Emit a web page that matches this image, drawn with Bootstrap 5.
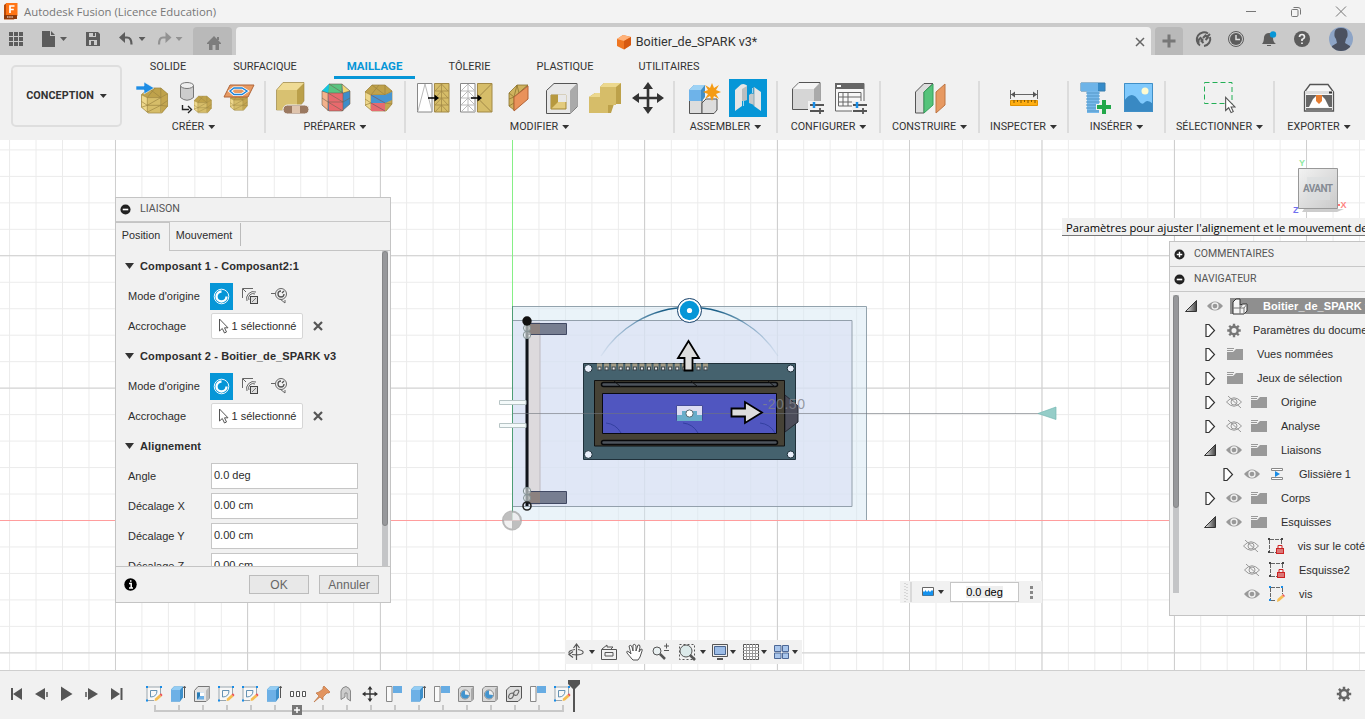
<!DOCTYPE html>
<html lang="fr">
<head>
<meta charset="utf-8">
<meta name="viewport" content="width=device-width, initial-scale=1">
<title>Autodesk Fusion (Licence Education)</title>
<link href="https://cdn.jsdelivr.net/npm/bootstrap@5.3.0/dist/css/bootstrap.min.css" rel="stylesheet">
<style>
:root{--ui:Roboto,"Liberation Sans",sans-serif;--txt:"Liberation Sans",Arial,sans-serif;--chrome:#f1f1f1;--accent:#0696d7}
body{height:719px;overflow:hidden;font:11px/1 var(--txt);color:#2d2d2d;background:var(--chrome)}
svg{display:block;flex-shrink:0;overflow:visible}
.caret{width:7px;height:4px;flex-shrink:0;background:#333;clip-path:polygon(0 0,100% 0,50% 100%)}
.titlebar{height:23px;background:#f3f3f3;padding-left:3px}
.apptitle{font:11.35px/23px "Open Sans",sans-serif;color:#777;margin-left:5px}
.wincontrols{gap:32px;padding-right:18px}
.tabbar{height:32px;background:#cacaca;color:#5c5c5c}
.quick{width:193px;padding-left:7px}
.quick .file{margin-left:14px}.quick .save{margin-left:15px}.quick .undo{margin-left:14px}.quick .redo{margin-left:9px}
.quick .caretslot{width:13px;display:flex;justify-content:center}
.quick .undocaret{width:10px}
.quick .redocaret{width:10px}
.quick .caret{background:#5c5c5c}
.hometab{width:39px;height:28px;background:#b9b9b9;border-radius:4px 4px 0 0;margin-right:4px;padding-left:2px;color:#7d7d7d}
.doctab{width:915px;height:28px;background:var(--chrome);border-radius:4px 4px 0 0;font:12.6px/28px var(--ui);color:#333;position:relative;padding-top:2px}
.doctab .logo{margin-left:-14px}
.doctab .shut{position:absolute;right:6px;top:10px}
.addtab{width:28px;height:28px;background:#b9b9b9;border-radius:4px 4px 0 0;margin-left:4px;color:#777}
.status{padding-left:11px;gap:15px}
.status svg:last-child{margin-left:2px}
.ribbon{height:85px;font-family:var(--ui);color:#333}
.workspace{width:111px;height:62px;margin:10px 0 0 11px;border:2px solid #dedede;border-radius:5px;font-weight:700;font-size:10.8px;letter-spacing:.05px;gap:6px}
.modes{height:24px;padding-left:16px;font-size:10.95px}
.modes span{height:24px;line-height:23px;text-align:center;margin-right:23px;white-space:nowrap;color:#333}
.modes span:nth-child(1){width:60px}.modes span:nth-child(2){width:88px;margin-right:25px}
.modes span:nth-child(3){width:81px;margin-right:22px;color:var(--accent);font-weight:700;font-size:11.5px;border-bottom:3px solid var(--accent)}
.modes span:nth-child(4){width:65px}.modes span:nth-child(5){width:80px}.modes span:nth-child(6){width:82px}
.group{position:relative;height:61px;flex-shrink:0;display:flex;flex-direction:column;align-items:center}
.group:not(:last-child)::after{content:"";position:absolute;right:-1px;top:2px;height:52px;width:2px;background:#dcdcdc}
.tools{display:flex;gap:5px;margin-left:2px}
.w-create .tools{margin-left:7px}
.grouplabel{display:flex;align-items:center;gap:4px;font-size:10.75px;height:19px;padding-top:1px;white-space:nowrap}
.w-create{width:143px}.w-prep{width:140px}.w-mod{width:269px}.w-asm{width:103px}.w-cons{width:99px}.w-insp{width:89px}.w-ins{width:97px}.w-sel{width:109px}.w-exp{width:90px}
.stage{height:530px;position:relative;overflow:hidden;background:#fff}
.stage>.scene{position:absolute;left:0;top:0}
.win{position:absolute;background:var(--chrome)}
.dialogwin{left:115px;top:57px;width:276px;height:406px;border:1px solid #c4c4c4}
.winhead{height:24px;border-bottom:1px solid #c8c8c8;font:10.7px/1 var(--ui);color:#555;gap:9px;padding-left:4px}
.browser .winhead{height:25px;font-size:10.5px}
.dtabs{height:29px;font-size:10.8px}
.dtabs span{height:29px;line-height:27px;text-align:center;border-right:1px solid #c4c4c4;border-bottom:1px solid #c4c4c4}
.dtabs span:first-child{width:54px;border-top:1px solid #c4c4c4;border-bottom:0;line-height:25px;padding-right:3px}
.dtabs span:nth-child(2){width:70px;border-right:0;padding-right:2px}
.dtabs span:nth-child(3){flex:1;border-right:0;position:relative}
.dtabs span:nth-child(3)::before{content:"";position:absolute;left:0;top:1px;height:23px;border-left:1px solid #bbb}
.dbody{height:315px;overflow:hidden;position:relative}
.line{height:30px;display:flex;align-items:center;padding-left:12px}
.line>label{width:83px;flex-shrink:0}
.sect{padding-left:9px;gap:6px;font-weight:700;font-size:11px;letter-spacing:.12px}
.sect .caret{width:9px;height:6px}
.pick{width:23px;height:27px;background:var(--accent);margin:0 5px 0 -1px}
.alt{margin-right:6px}
.chip{width:92px;height:26px;border:1px solid #d6d6d6;border-radius:2px;background:#fff;gap:3px}
.field{width:147px;height:26px;border:1px solid #c6c6c6;background:#fff;line-height:23px;padding-left:2px}
.track{position:absolute;width:6px;background:#c4c5c7}
.dbody .track{right:2px;top:0;height:315px}
.dbody .thumb{height:275px}
.browser .track{left:3px;top:3px;height:298px}
.browser .thumb{height:213px}
.thumb{width:6px;background:#97989b;border:1px solid #858688;border-radius:3px}
.dfoot{height:36px;border-top:1px solid #c4c4c4;padding:0 11px 0 8px;gap:10px}
.dbtn{width:60px;height:19px;border:1px solid #bcbcbc;background:#e8e8e8;font-size:12px;line-height:18px;text-align:center;color:#666}
.hint{right:0;top:78px;width:303px;height:18px;background:#f0f0f0;border-bottom:1px solid #777;font:11.2px/19px "Open Sans",sans-serif;color:#000;padding-left:4px;white-space:nowrap;overflow:hidden}
.browser{left:1169px;top:101px;width:196px;height:375px;border:1px solid #c4c4c4;border-right:0;overflow:hidden}
.tree{position:relative;padding-top:2px}
.node{height:24px;display:flex;align-items:center;white-space:nowrap}
.node .tw{width:16px;margin-right:7px}.node .ey{width:18px;margin-right:6px}.node .ic{width:20px;margin-right:12px}
.node .cogic{width:18px;margin-right:10px;color:#777}
.l0{padding-left:13px}.l1{padding-left:32px}.l2{padding-left:50px}
.rootname{flex:1;height:16px;background:#8f8f8f;color:#fff;font-weight:700;display:flex;align-items:center;gap:15px;padding-left:1px;letter-spacing:.08px}
.viewbar{left:565px;top:500px;width:237px;height:24px}
.anglebar{left:900px;top:441px;width:142px;height:22px}
.anglebar .unit{margin-left:10px}
.anglebar .caret{width:6px;margin:0 6px 0 3px}
.angleval{width:69px;height:20px;border:1px solid #c6c6c6;background:#fff;text-align:center;line-height:18px;color:#000}
.angleval span{background:#eee}
.timeline{height:49px;border-top:1px solid #cfcfcf;position:relative;padding-top:14px}
.play{width:124px;padding-left:8px;gap:9px;color:#555}
.feats{margin-left:18px}
.feat{width:24px;height:27px;position:relative;display:flex;justify-content:center}
.feat>svg:first-child{margin-left:-1px}
.feat::before{content:"";position:absolute;left:12px;top:20px;width:2px;height:5px;background:#c8c8c8}
.feat::after{content:"";position:absolute;left:0;right:0;top:25px;height:2px;background:#c8c8c8}
.feat:first-child::after{left:12px}.feat:last-child::after{right:10px}
.marker{position:absolute;left:567px;top:9px}
.expand{position:absolute;left:6px;top:20px;z-index:2}
.gear{margin-left:auto;margin-right:13px;margin-top:1px;color:#666}
</style>
</head>
<body class="d-flex flex-column">
<svg width="0" height="0" class="position-absolute" aria-hidden="true">
<defs>
<linearGradient id="fadeArc" x1="601" x2="778" y1="0" y2="0" gradientUnits="userSpaceOnUse"><stop offset="0" stop-color="#2a6a94" stop-opacity=".05"/><stop offset=".35" stop-color="#1c6088"/><stop offset=".65" stop-color="#1c6088"/><stop offset="1" stop-color="#2a6a94" stop-opacity=".05"/></linearGradient>
<linearGradient id="tri" x1="0" x2="1"><stop offset="0" stop-color="#eee"/><stop offset="1" stop-color="#444"/></linearGradient>
<linearGradient id="cubeFace" x1="0" x2="1" y1="0" y2="1"><stop offset="0" stop-color="#f2f2f2"/><stop offset="1" stop-color="#c9c9c9"/></linearGradient>
<pattern id="minor" x="512" y="520" width="26.47" height="26.47" patternUnits="userSpaceOnUse"><path d="M.5 0V26.47M0 .5H26.47" stroke="#ebebeb" fill="none"/></pattern>
<symbol id="mesh" viewBox="0 0 28 28"><path d="M7 1H20L27 7V20L21 27H7L0 21V8Z" fill="#d6bd69"/><path d="M7 1H20L27 7 20 11H6L0 8Z" fill="#bfa24b"/><path d="M20 11 27 7V20L21 27Z" fill="#c4a650"/><path d="M0 8 6 11V26L0 21Z" fill="#eed88c"/><path d="M7 1H20L27 7V20L21 27H7L0 21V8ZM0 8 6 11H20L27 7M6 11V26M20 11V26M0 15 6 19H20L27 14M6 19 20 11M6 26 20 19M7 1 20 11M6 11 14 1M20 11V1M0 21 6 19M20 19 27 20" fill="none" stroke="#9b8340" stroke-width=".7"/></symbol>
<symbol id="eye" viewBox="0 0 18 12"><path d="M1 6Q9-3 17 6 9 15 1 6Z" fill="#999"/><circle cx="9" cy="6" r="3" fill="#999" stroke="#f1f1f1" stroke-width="1.3"/></symbol>
<symbol id="eyeoff" viewBox="0 0 18 12"><path d="M1.5 6Q9-2.5 16.500 6 9 14.500 1.500 6ZM3 0 16 12" fill="none" stroke="#999"/><circle cx="9" cy="6" r="3" fill="none" stroke="#999"/></symbol>
<symbol id="folder" viewBox="0 0 18 14"><path d="M1 5H7L10 2H17V13H1Z" fill="#999"/><path d="M1 1.500H8M1 3.500H7" stroke="#999" stroke-width="1.200"/></symbol>
<symbol id="closed" viewBox="0 0 12 15"><path d="M2 1.500H5L10.500 7.500 5 13.500H2Z" fill="#fff" stroke="#333" stroke-width="1.2"/></symbol>
<symbol id="opened" viewBox="0 0 12 12"><path d="M11.500.5V11.500H.5Z" fill="url(#tri)" stroke="#333"/></symbol>
<symbol id="minus" viewBox="0 0 10 10"><circle cx="5" cy="5" r="4.600" fill="#222"/><path d="M2.500 5H7.500" stroke="#fff" stroke-width="1.500"/></symbol>
<symbol id="plusdot" viewBox="0 0 10 10"><circle cx="5" cy="5" r="4.600" fill="#222"/><path d="M2.500 5H7.500M5 2.500V7.500" stroke="#fff" stroke-width="1.300"/></symbol>
<symbol id="cog" viewBox="0 0 16 16"><circle cx="8" cy="8" r="4" fill="none" stroke="currentColor" stroke-width="2.600"/><path d="M8 .8V4M8 12V15.200M.8 8H4M12 8H15.200M2.900 2.900 5.100 5.100M10.900 10.900 13.100 13.100M2.900 13.100 5.100 10.900M10.900 5.100 13.100 2.900" stroke="currentColor" stroke-width="2.500"/></symbol>
<symbol id="cursor" viewBox="0 0 11 16"><path d="M1.500 1V13L4.300 10.500 6.500 15 8.500 14 6.500 9.800H10Z" fill="#fff" stroke="#555"/></symbol>
<symbol id="snap0" viewBox="0 0 24 27"><circle cx="12" cy="13.500" r="7.600" fill="none" stroke="#fff" stroke-width="1"/><path d="M12 8.300A5.200 5.200 0 1 0 17.200 13.500" fill="none" stroke="#fff" stroke-width="2.400"/></symbol>
<symbol id="snap1" viewBox="0 0 24 24"><path d="M4.500 14V4.500H15M5 5 8 8M9 17A7 7 0 0 1 18 8M11 16A4.500 4.500 0 0 1 17 10" fill="none" stroke="#666"/><rect x="12.500" y="12.500" width="7" height="7" fill="#ddd" stroke="#444"/><path d="M14 18 18 14" stroke="#777"/></symbol>
<symbol id="snap2" viewBox="0 0 24 24"><path d="M3 9.500H7M12 15 17 19V16" fill="none" stroke="#666"/><circle cx="13" cy="10" r="5.500" fill="none" stroke="#666"/><path d="M13 7A3 3 0 1 0 16 10M16 7 14 9" fill="none" stroke="#555" stroke-width="1.300"/></symbol>
<symbol id="sketch" viewBox="0 0 18 18"><path d="M2 2H16V9L9 15.500H2Z" fill="#f8f8f8"/><path d="M2 2H16M2 2V15.500H9M15.500 2V9" fill="none" stroke="#9aa6ae"/><path d="M5.500 5.500H12Q12 12 5.500 12Z" fill="none" stroke="#6592b3"/><path d="M1 1h2v2H1zM15 1h2v2h-2zM1 14.500h2v2H1z" fill="#198ce6"/><path d="M9.500 16 10 13.500 14.500 9.500 16.500 11.500 12 15.500Z" fill="#f6bd50"/><path d="M14.500 9.500 16 8.200 17.500 10 16.500 11.500Z" fill="#e55"/></symbol>
<symbol id="extrude" viewBox="0 0 18 18"><path d="M2 4.500 5 1.500H14V12.500L11 16.500H2Z" fill="#3d8fca"/><path d="M2 5H11V16.500H2Z" fill="#6db0e6"/><path d="M2 5 5 1.500H14L11 5Z" fill="#94cdf4"/><path d="M15.500 2V13M14.300 3 15.500 1 16.700 3" fill="none" stroke="#555"/></symbol>
<symbol id="shell" viewBox="0 0 18 18"><path d="M1.500 5.500 5 1.500H16.500V13L13 16.500H1.500Z" fill="#e4e4e4" stroke="#777"/><path d="M13 5.500 16.500 1.500V13L13 16.500Z" fill="#bbb"/><path d="M4 7.500H11V14.500H4Z" fill="#6db0e6"/><path d="M7 7.500H11V11H7Z" fill="#fff"/><path d="M4 7.500H7V11L4 14.500Z" fill="#287bb5"/></symbol>
<symbol id="flag" viewBox="0 0 18 18"><path d="M1.500 1.500H7V16.500H1.500Z" fill="#fafafa" stroke="#888"/><path d="M8 1H17V8H8Z" fill="#67ace3"/></symbol>
<symbol id="hole" viewBox="0 0 18 18"><path d="M1.500 4 4 1.500H16.500V14L14 16.500H1.500Z" fill="#d9d9d9" stroke="#888"/><path d="M14 4 16.500 1.500V14L14 16.500Z" fill="#aaa"/><circle cx="8" cy="9.500" r="4.500" fill="#eee" stroke="#888"/><path d="M8 9.500V5.500A4 4 0 1 0 12 10Z" fill="#4394ce"/></symbol>
<symbol id="move" viewBox="0 0 32 32"><path d="M16 3V29M3 16H29" stroke="#333" stroke-width="2.600"/><path d="M16 0 21 7H11ZM16 32 11 25H21ZM0 16 7 11V21ZM32 16 25 21V11Z" fill="#333"/></symbol>
<symbol id="sketchlock" viewBox="0 0 18 18"><path d="M2.500 3V15M3 2.500H14M14.500 3V9M3 15.500H9" fill="none" stroke="#666" stroke-dasharray="4 1"/><path d="M1 1h2v2H1zM14 1h2v2h-2zM1 14h2v2H1z" fill="#444"/><rect x="9.500" y="11.500" width="7" height="5" fill="#dc7777" stroke="#c22"/><path d="M11 11V8.500H15V11" fill="none" stroke="#c22"/></symbol>
</defs>
</svg>

<header class="titlebar d-flex align-items-center">
<svg width="16" height="17" viewBox="0 0 16 17"><path d="M1 2 3 .5H13.500V13L11 16.500H1Z" fill="#b84b0a"/><path d="M3 0H14.500V13H3Z" fill="#ff7414"/><path d="M1 12H14V16H1Z" fill="#8d3a0b"/><path d="M7 10V3H11.500M7 6.500H10.800" stroke="#fff" stroke-width="1.700" fill="none"/><path d="M4 14H10" stroke="#fff" stroke-dasharray="1.500 .7"/></svg>
<span class="apptitle">Autodesk Fusion (Licence Education)</span>
<div class="wincontrols d-flex align-items-center ms-auto">
<svg width="12" height="12"><path d="M1 5.500H11" stroke="#777"/></svg>
<svg width="14" height="12"><path d="M2.500 4.500Q2.500 3.500 3.500 3.500H8Q9 3.500 9 4.500V9Q9 10.500 8 10.500H3.500Q2.500 10.500 2.500 9.500ZM4.500 1.500H9Q11.500 1.500 11.500 3.500V8.500" fill="none" stroke="#777"/></svg>
<svg width="12" height="12"><path d="M1 .5 11 10.500M11 .5 1 10.500" stroke="#777"/></svg>
</div>
</header>

<nav class="tabbar d-flex align-items-end">
<div class="quick d-flex align-items-center h-100">
<svg width="18" height="18"><path d="M2 2h4v4H2zM7 2h4v4H7zM12 2h4v4h-4zM2 7h4v4H2zM7 7h4v4H7zM12 7h4v4h-4zM2 12h4v4H2zM7 12h4v4H7zM12 12h4v4h-4z" fill="currentColor"/></svg>
<svg width="18" height="18" class="file"><path d="M3 1H11V6H16V17H3ZM12 1 16 5H12Z" fill="currentColor"/></svg>
<span class="caretslot"><i class="caret"></i></span>
<svg width="18" height="18" class="save"><path d="M1 2H13L15 4V16H1Z" fill="currentColor"/><path d="M4 3H11V7H4ZM4 10H12V15H4Z" fill="#cacaca"/><path d="M8 3H10V6H8ZM6 11H9V15H6Z" fill="currentColor"/></svg>
<svg width="20" height="18" class="undo"><path d="M6 7.500H10Q14.500 7.500 14.500 14.500" fill="none" stroke="currentColor" stroke-width="2.200"/><path d="M2 7.500 8 2V13Z" fill="currentColor"/></svg>
<span class="caretslot undocaret"><i class="caret"></i></span>
<svg width="18" height="18" class="redo opacity-50"><path d="M11 7.500H7Q3 7.500 3 14.500" fill="none" stroke="currentColor" stroke-width="2.200"/><path d="M15.500 7.500 9.500 2V13Z" fill="currentColor"/></svg>
<span class="caretslot redocaret opacity-50"><i class="caret"></i></span>
</div>
<div class="hometab d-flex align-items-center justify-content-center"><svg width="16" height="16" class="mt-1"><path d="M1 8 8 1 15 8V9H13V15H9.500V10H6.500V15H3V9H1ZM11 2H13V5H11Z" fill="currentColor"/></svg></div>
<div class="doctab d-flex align-items-center justify-content-center">
<svg width="16" height="16" class="logo me-1"><path d="M1 5 7 1 15 3V11L8 15.500 1 12Z" fill="#ef7622"/><path d="M1 5 7 1 15 3 8 7Z" fill="#ffb27a"/><path d="M8 7 15 3V11L8 15.500Z" fill="#d65911"/></svg>
<span>Boitier_de_SPARK v3*</span>
<svg width="10" height="10" class="shut"><path d="M1 1 9 9M9 1 1 9" stroke="#666" stroke-width="1.500"/></svg>
</div>
<div class="addtab d-flex align-items-center justify-content-center"><svg width="14" height="14"><path d="M7 .5V13.500M.5 7H13.500" stroke="currentColor" stroke-width="3"/></svg></div>
<div class="status d-flex align-items-center align-self-center">
<svg width="18" height="18"><path d="M6 15.500A7 7 0 1 1 14 3.500M16 7A7 7 0 0 1 10 16" fill="none" stroke="currentColor" stroke-width="2"/><path d="M4.500 13.500V10L6.500 8 8.500 10 7.500 11 9.500 13M9 8 11.500 5.500 13 7 16 4M11.500 10 14.500 7" stroke="currentColor" stroke-width="2" fill="none"/></svg>
<svg width="18" height="18"><circle cx="9" cy="9" r="7.500" fill="none" stroke="currentColor"/><circle cx="9" cy="9" r="6" fill="currentColor"/><path d="M9 5V9.500H13" stroke="#ddd" stroke-width="1.500" fill="none"/></svg>
<svg width="18" height="18"><path d="M2 14Q4 12 4 7Q5 3 9 3Q13 3 13 8Q13 12 16 14ZM7 15H11V16H7Z" fill="currentColor"/><circle cx="13" cy="4.500" r="3.200" fill="#0696d7"/></svg>
<svg width="18" height="18"><circle cx="9" cy="9" r="8" fill="currentColor"/><path d="M6.500 7Q6.500 4.500 9 4.500Q11.500 4.500 11.500 7Q11.500 8.500 9 9.500V11M9 12.500V14" stroke="#eee" stroke-width="1.700" fill="none"/></svg>
<svg width="26" height="26"><clipPath id="av"><circle cx="13" cy="13" r="12"/></clipPath><g clip-path="url(#av)"><path d="M0 0H26V26H0Z" fill="#8da4c6"/><path d="M13 2Q20 2 19.500 8 20 11 18 13L17 17 22 20 24 26H2L4 20 9 17 8 13Q6 11 6.500 8 6 2 13 2Z" fill="#4b5160"/></g></svg>
</div>
</nav>

<section class="ribbon d-flex">
<div class="workspace d-flex align-items-center justify-content-center flex-shrink-0"><span>CONCEPTION</span><i class="caret"></i></div>
<div class="flex-grow-1">
<div class="modes d-flex"><span>SOLIDE</span><span>SURFACIQUE</span><span>MAILLAGE</span><span>TÔLERIE</span><span>PLASTIQUE</span><span>UTILITAIRES</span></div>
<div class="d-flex">
<div class="group w-create"><div class="tools">
<svg width="38" height="38"><use href="#mesh" x="6" y="8" width="28" height="27"/><path d="M1 7H9V3L19 9 9 15V11H1Z" fill="#1e8de5" stroke="#f1f1f1" stroke-width=".6"/></svg>
<svg width="38" height="38"><path d="M2.500 6V18.500Q9 24 15.500 18.500V6" fill="#ccc" stroke="#777"/><ellipse cx="9" cy="6.500" rx="6.500" ry="3" fill="#eee" stroke="#777"/><use href="#mesh" x="16" y="16" width="18" height="19"/><path d="M4.500 26V30.500H11M10 27 13.500 30.500 10 34" fill="none" stroke="#222" stroke-width="1.400"/></svg>
<svg width="38" height="38"><use href="#mesh" x="9" y="14" width="18" height="18"/><path d="M9 6H33L27 18H3Z" fill="#e79a62" stroke="#af653b"/><path d="M13 9H21L26 12 21 15.500H13L9 12Z" fill="none" stroke="#fff" stroke-width="3"/><path d="M13 9H21L26 12 21 15.500H13L9 12Z" fill="none" stroke="#1b83d8" stroke-width="1.400"/></svg>
</div><div class="grouplabel">CRÉER<i class="caret"></i></div></div>
<div class="group w-prep"><div class="tools">
<svg width="38" height="38"><path d="M2.500 11 9 3.500H30V22L23 31H2.500Z" fill="#bba04a" stroke="#9b8340" stroke-width=".6"/><path d="M3 11H23V31H3Z" fill="#d8c171"/><path d="M3 11 9 4H30L23 11Z" fill="#efdb95"/><rect x="9" y="26" width="26" height="9" rx="4.500" fill="#9b7961" stroke="#f1f1f1"/><path d="M18 27H26V34H18Z" fill="#dfc4ad"/></svg>
<svg width="38" height="38"><path d="M12 5H25L33 12V25L25 32H12L5 26V12Z" fill="#3e8dca"/><path d="M12 5H25V14H11Z" fill="#59c480"/><path d="M11 14H26V32H12Z" fill="#e8696d"/><path d="M5 12 11 14V32L5 26Z" fill="#f3b28c"/><path d="M12 5 11 14 5 12Z" fill="#13c8df"/><path d="M25 5 33 12 26 14Z" fill="#f3d675"/><path d="M12 5H25L33 12V25L25 32H12L5 26V12L11 14H26L33 12M11 14V32M26 14V32M5 19 11 23H26L33 19M12 5 26 14M11 14 26 23M11 23 26 32M25 5V14" fill="none" stroke="#6e6350" stroke-width=".6"/></svg>
<svg width="38" height="38"><use href="#mesh" x="5" y="5" width="28" height="28"/><path d="M11 16H25V24H11ZM25 16 32 13V21L25 24Z" fill="#4795d0"/><path d="M11 24H25V32H11Z" fill="#e66b70"/><path d="M11 16 25 24M11 24 25 32" stroke="#7a5560" stroke-width=".7"/></svg>
</div><div class="grouplabel">PRÉPARER<i class="caret"></i></div></div>
<div class="group w-mod"><div class="tools">
<svg width="38" height="38"><path d="M3.500 4.500H18V33H3.500Z" fill="#fff" stroke="#888"/><path d="M4 32 11 5 18 32" fill="none" stroke="#bbb"/><path d="M20.500 4.500H35V33H20.500Z" fill="#d6bd69" stroke="#a28947"/><path d="M27.500 5V33M21 12H35M21 19H35M21 26H35M21 12 27.500 5 34 12M21 19 27.500 12 34 19M21 26 27.500 19 34 26M21 33 27.500 26 34 33" stroke="#a28947" stroke-width=".8" fill="none"/><path d="M14 19H22" stroke="#000" stroke-width="1.500"/><path d="M20.500 15.500 25 19 20.500 22.500Z"/></svg>
<svg width="38" height="38"><path d="M3.500 4.500H18V33H3.500Z" fill="#fff" stroke="#888"/><path d="M11 5V33M4 12H18M4 19H18M4 26H18M4 12 11 5 18 12M4 19 11 12 18 19M4 26 11 19 18 26M4 33 11 26 18 33" stroke="#bbb" fill="none"/><path d="M20.500 4.500H35V33H20.500Z" fill="#d6bd69" stroke="#a28947"/><path d="M20.500 19 34.500 5M20.500 19 34.500 33" stroke="#a28947"/><path d="M14 19H22" stroke="#000" stroke-width="1.500"/><path d="M20.500 15.500 25 19 20.500 22.500Z"/></svg>
<svg width="38" height="38"><path d="M9 14 17 6H28L14 18V31L9 27Z" fill="#cfb25e" stroke="#8c7430" stroke-width=".8"/><path d="M9 14 14 18 17 6 19 14 28 6M9 20 14 18M9 27 14 24" stroke="#8c7430" stroke-width=".8" fill="none"/><path d="M14 18 28 7V20L14 32Z" fill="#e9925b" stroke="#b36235"/></svg>
<svg width="38" height="38"><path d="M3.500 11.500 11 4.500H34V28L27 34.500H3.500Z" fill="#e8e8e8" stroke="#555"/><path d="M27 11.500 34 4.500V28L27 34.500Z" fill="#aaa"/><path d="M8 16H23V30H8Z" fill="#e3cb7d" stroke="#a18534"/><path d="M15 15.500H23.500V23H15Z" fill="#e8e8e8"/><path d="M8 16H15V23L8 30Z" fill="#b7993f"/></svg>
<svg width="38" height="38"><path d="M3 18 9 14H14V8L18 4H35V25H28L25 34H3Z" fill="#bda14a"/><path d="M3 18H14V8H30V26H22V34H3Z" fill="#d6bd69"/><path d="M3 18 9 14H14V18ZM14 8 18 4H35L30 8Z" fill="#ecd88e"/></svg>
<svg width="38" height="38"><use href="#move" x="3" y="3" width="32" height="32"/></svg>
</div><div class="grouplabel">MODIFIER<i class="caret"></i></div></div>
<div class="group w-asm"><div class="tools">
<svg width="38" height="38"><path d="M3.500 21H16V34.500H3.500Z" fill="#ddd" stroke="#555"/><path d="M16 34.500V24L20 20H31V31L28 34.500Z" fill="#ddd" stroke="#555"/><path d="M3 11 8 6H19V18L16 22H3Z" fill="#408ec7"/><path d="M3 11H15V22H3Z" fill="#6eb3e9"/><path d="M3 11 8 6H19L15 11Z" fill="#9dd2f5"/><path d="M26 4 28 9 33 6 30 11 35 13 30 15 33 20 28 17 26 22 24 17 19 20 22 15 17 13 22 11 19 6 24 9Z" fill="#f59b14"/></svg>
<svg width="38" height="38"><path d="M0 0H38V38H0Z" fill="#0696d7"/><path d="M6 11 12 5.500Q15 4 18 6.500V21L13 22V27L6 32Z" fill="#e6e6e6"/><path d="M13 10 18 7V21L13 22Z" fill="#b9bec0"/><path d="M25 8 32 13V32L25 27Z" fill="#e6e6e6"/><path d="M20 16Q22 13.500 25 15V26L20 24Z" fill="#c4c9cb"/><path d="M25 8V27" stroke="#8fa9b5"/><path d="M14.500 22V27M23.500 9V14" stroke="#9fd8f2"/></svg>
</div><div class="grouplabel">ASSEMBLER<i class="caret"></i></div></div>
<div class="group w-asm"><div class="tools">
<svg width="38" height="38"><path d="M3.500 10 10 3.500H31V24L25 30.500H3.500Z" fill="#d6d6d6" stroke="#555"/><path d="M4 10 10 4H30L25 10Z" fill="#f5f5f5"/><path d="M25 10 31 4V24L25 30Z" fill="#aaa"/><path d="M19 22H36V35H19Z" fill="#f1f1f1"/><path d="M21 26H35M21 32H35M31 29V35" stroke="#555" stroke-width="1.800"/><path d="M25 23V29" stroke="#188de7" stroke-width="2.500"/></svg>
<svg width="38" height="38"><path d="M3.500 4.500H32V32H3.500Z" fill="#f8f8f8" stroke="#666"/><path d="M3 4H32V10H3Z" fill="#666"/><path d="M5 6H9V8H5Z" fill="#fff"/><path d="M6.500 13.500H29V27H6.500ZM6 18H29M6 23H29M11 13V27M16 13V27" fill="none" stroke="#666"/><path d="M20 22H36V35H20Z" fill="#f1f1f1"/><path d="M21 26H35M21 32H35M31 29V35" stroke="#555" stroke-width="1.800"/><path d="M25 23V29" stroke="#188de7" stroke-width="2.500"/></svg>
</div><div class="grouplabel">CONFIGURER<i class="caret"></i></div></div>
<div class="group w-cons"><div class="tools"><svg width="38" height="38"><path d="M3.500 13 12 4.500H21L12 13V34H3.500Z" fill="#ddd" stroke="#555"/><path d="M12 13 21 5V26L12 34Z" fill="#55c37a" stroke="#34a05b"/><path d="M24 13 33 5V26L24 34Z" fill="#e79961" stroke="#bd7443"/></svg></div><div class="grouplabel">CONSTRUIRE<i class="caret"></i></div></div>
<div class="group w-insp"><div class="tools"><svg width="38" height="38"><path d="M4.500 11V20M31.500 11V20M5 15.500H31" stroke="#666"/><path d="M5 15.500 9 12.500V18.500ZM31 15.500 27 12.500V18.500Z" fill="#555"/><path d="M4.500 21.500H31.500V26.500H4.500Z" fill="#ffae11" stroke="#e29300"/><path d="M8 21V24M11.500 21V23M15 21V24M18.500 21V23M22 21V24M25.500 21V23M29 21V24" stroke="#805500"/></svg></div><div class="grouplabel">INSPECTER<i class="caret"></i></div></div>
<div class="group w-ins"><div class="tools">
<svg width="38" height="38"><path d="M4 4H28V12H4Z" fill="#358bc9" stroke="#387cac"/><path d="M4 4H21V12H4Z" fill="#6eb4e8"/><path d="M10 12H22V34H10Z" fill="#77b9eb"/><path d="M9 14H23M9 17H23M9 20H23M9 23H23M9 26H23M9 29H23M10 32H22" stroke="#5597c7"/><path d="M27 20V35M19 28H35" stroke="#f1f1f1" stroke-width="6"/><path d="M27 21V35M20 28H34" stroke="#23a84a" stroke-width="4"/></svg>
<svg width="38" height="38"><path d="M4 4H33V33H4Z" fill="#80c9fc"/><path d="M4 22Q12 10 19 22Q22 27 25 23Q28 20 33 25V33H4Z" fill="#3989c3"/><circle cx="25" cy="12" r="3.500" fill="#fffad0"/><path d="M4.500 4.500H32.500V32.500H4.500Z" fill="none" stroke="#408fc7"/></svg>
</div><div class="grouplabel">INSÉRER<i class="caret"></i></div></div>
<div class="group w-sel"><div class="tools"><svg width="38" height="38"><path d="M2.500 3.500H30V24.500H2.500Z" fill="none" stroke="#22af55" stroke-dasharray="5 3"/><use href="#cursor" x="22" y="17" width="12" height="18"/></svg></div><div class="grouplabel">SÉLECTIONNER<i class="caret"></i></div></div>
<div class="group w-exp"><div class="tools"><svg width="38" height="38"><path d="M3.500 13 9 5.500H27L32.500 13V32H3.500Z" fill="#f7f7f7" stroke="#555" stroke-width="1.300"/><path d="M4 12H32V15H4Z" fill="#ddd"/><path d="M5 16H31V28H5Z" fill="#666"/><path d="M8 28 12 20 15 17 18 22 21 17 24 20 28 28Z" fill="#fff"/><path d="M15 16H21V22L18 25 15 22Z" fill="#e57d32"/><path d="M28 13.500H31" stroke="#333" stroke-width="2"/><path d="M5 29H31V31H5Z" fill="#777"/></svg></div><div class="grouplabel">EXPORTER<i class="caret"></i></div></div>
</div>
</div>
</section>

<main class="stage">
<svg class="scene" width="1365" height="530" viewBox="0 140 1365 530">
<path d="M0 140H1365V670H0Z" fill="url(#minor)"/>
<path d="M115.500 140V670M247.500 140V670M380.500 140V670M644.500 140V670M777.500 140V670M909.500 140V670M1042 140V670M1174.500 140V670M1306.500 140V670M0 255.700H1365M0 388.100H1365M0 652.900H1365" stroke="#cfcfcf" fill="none"/>
<path d="M512.500 306.500H866.500V520.500H512.500Z" fill="#d6e8f3" fill-opacity=".5" stroke="#93a3ad"/>
<path d="M512.500 320.500H852V506.500H512.500Z" fill="#d9e0f4" fill-opacity=".6" stroke="#93a0ac"/>
<path d="M0 520.500H1170" stroke="#ff9d9d"/><path d="M512.500 140V520" stroke="#86ef86"/>
<path d="M512.500 306V520" stroke="#4e9d75"/>
<path d="M528 323H540V504H528Z" fill="#dddadd" stroke="#bdbac0"/>
<path d="M527 323.500H566.500V334.500H527ZM527 491.500H566.500V503.500H527Z" fill="#777e91" stroke="#414963"/><path d="M528 324H540V334H528ZM528 492H540V503H528Z" fill="#8c8280"/>
<path d="M527 321V506" stroke="#10141a" stroke-width="3"/>
<g fill="#edf3f3" fill-opacity=".6" stroke="#819092"><circle cx="527" cy="335" r="3.700"/><circle cx="527" cy="328" r="3.500"/><circle cx="527" cy="491" r="3.700"/><circle cx="527" cy="498" r="3.500"/></g>
<circle cx="527" cy="321" r="4.700" fill="#111"/><circle cx="527" cy="506" r="4" fill="none" stroke="#222" stroke-width="1.600"/>
<path d="M499.500 400.500H526V404.500H499.500ZM499.500 423.500H526V427.500H499.500Z" fill="#f4fafa" stroke="#b7c4c5"/>
<path d="M583.500 363.500H795.500V459.500H583.500Z" fill="#45626e" stroke="#20313b"/>
<g fill="#e9effa" stroke="#1b2f39"><circle cx="588.300" cy="368.500" r="3.900"/><circle cx="790.700" cy="368.500" r="3.500"/><circle cx="588.300" cy="454.500" r="3.900"/><circle cx="790.700" cy="454.500" r="3.500"/></g>
<path d="M597 366.500H709" stroke="#a39c86" stroke-width="6" stroke-dasharray="5 2.070"/><path d="M597.500 368.500H709" stroke="#39434a" stroke-width="4" stroke-dasharray="4 3.070"/><path d="M598.500 368.500H709" stroke="#eee" stroke-width="2" stroke-dasharray="2 5.070"/>
<path d="M785 395 798 406V422L785 432Z" fill="#4c4d5a" stroke="#272a33"/>
<path d="M594.500 380.500H784.500V446H594.500Z" fill="#464236" stroke="#111"/>
<rect x="601.500" y="382.500" width="176" height="4" rx="2" fill="#4c535c" stroke="#08090b" stroke-width="1.500"/><rect x="601.500" y="440.500" width="176" height="4" rx="2" fill="#4c535c" stroke="#08090b" stroke-width="1.500"/>
<path d="M602.500 393.500H776.500V433.500H602.500Z" fill="#5056c0" stroke="#080910"/>
<path d="M606 423Q616 424 621 433M683 423Q693 424 698 433M760 423Q770 424 775 433" fill="none" stroke="#3440a0"/><path d="M614 381 621 387M691 381 698 387M768 381 775 387" stroke="#111"/>
<path d="M513 413.500H1040" stroke="#70757c" stroke-opacity=".6"/>
<path d="M676.500 405.500H702.500V420.500H676.500Z" fill="#dcdcf2" stroke="#444b9a"/><path d="M677 415H682V411H697V415H702V421H677Z" fill="#68adca"/><circle cx="689.500" cy="413.500" r="3.600" fill="#fff" stroke="#596b73"/>
<path d="M731.500 408.500H745V402L762 412.500 745 423V416.500H731.500Z" fill="#ddd" stroke="#000" stroke-width="1.800"/>
<path d="M684.500 370.500V358H678L688.500 341 699 358H692.500V370.500Z" fill="#ddd" stroke="#000" stroke-width="1.800"/>
<text x="762.500" y="409" font-family="Liberation Sans" font-size="14" fill="#80848c" fill-opacity=".8" textLength="42.500">-20.50</text>
<path d="M601 356A104.700 104.700 0 0 1 778 356" fill="none" stroke="url(#fadeArc)" stroke-width="1.400"/>
<circle cx="689.500" cy="310.500" r="12" fill="#fff" stroke="#14406a"/><circle cx="689.500" cy="310.500" r="9.700" fill="#0696d7"/><circle cx="689.500" cy="310.500" r="2.600" fill="#fff"/>
<path d="M1038 413.500 1056 407V419.500Z" fill="#95cdc8" stroke="#76b8b3" stroke-width=".7"/>
<g opacity=".8"><circle cx="512" cy="520.500" r="9" fill="#eee" stroke="#a7a7a7" stroke-width="2"/><path d="M512 520.500V511.500A9 9 0 0 0 503 520.500ZM512 520.500V529.500A9 9 0 0 0 521 520.500Z" fill="#b0b0b0"/></g>
<path d="M1304 209H1344L1337 212H1302Z" fill="#ccc"/><path d="M1298.500 168.500H1337.500V208.500H1298.500Z" fill="url(#cubeFace)" stroke="#989898"/><path d="M1307 177H1330V200H1307Z" fill="#dadde0" fill-opacity=".6"/>
<text x="1303" y="192" font-family="Roboto" font-weight="700" font-size="10" fill="#858b93" textLength="30">AVANT</text>
<g font-family="Liberation Sans" font-size="9" font-weight="700"><text x="1299" y="166" fill="#8ee9a0">Y</text><text x="1340.500" y="208" fill="#ff8282">X</text><text x="1293" y="213" fill="#7070ef">Z</text></g><path d="M1338 205H1340" stroke="#f77" stroke-width="2"/>
</svg>

<section class="win dialogwin">
<div class="winhead d-flex align-items-center"><svg width="11" height="11"><use href="#minus"/></svg><span>LIAISON</span></div>
<div class="dtabs d-flex"><span>Position</span><span>Mouvement</span><span></span></div>
<div class="dbody">
<div class="line sect"><i class="caret"></i><span>Composant 1 - Composant2:1</span></div>
<div class="line"><label>Mode d'origine</label><svg class="pick" width="23" height="27"><use href="#snap0"/></svg><svg class="alt" width="24" height="24"><use href="#snap1"/></svg><svg width="24" height="24"><use href="#snap2"/></svg></div>
<div class="line"><label>Accrochage</label><div class="chip d-flex align-items-center justify-content-center"><svg width="11" height="16"><use href="#cursor"/></svg><span>1 sélectionné</span></div><svg width="10" height="10" class="ms-2"><path d="M3 1 11 9M11 1 3 9" stroke="#555" stroke-width="2.200"/></svg></div>
<div class="line sect"><i class="caret"></i><span>Composant 2 - Boitier_de_SPARK v3</span></div>
<div class="line"><label>Mode d'origine</label><svg class="pick" width="23" height="27"><use href="#snap0"/></svg><svg class="alt" width="24" height="24"><use href="#snap1"/></svg><svg width="24" height="24"><use href="#snap2"/></svg></div>
<div class="line"><label>Accrochage</label><div class="chip d-flex align-items-center justify-content-center"><svg width="11" height="16"><use href="#cursor"/></svg><span>1 sélectionné</span></div><svg width="10" height="10" class="ms-2"><path d="M3 1 11 9M11 1 3 9" stroke="#555" stroke-width="2.200"/></svg></div>
<div class="line sect"><i class="caret"></i><span>Alignement</span></div>
<div class="line"><label>Angle</label><div class="field">0.0 deg</div></div>
<div class="line"><label>Décalage X</label><div class="field">0.00 cm</div></div>
<div class="line"><label>Décalage Y</label><div class="field">0.00 cm</div></div>
<div class="line"><label>Décalage Z</label><div class="field">0.00 cm</div></div>
<div class="track"><div class="thumb"></div></div>
</div>
<div class="dfoot d-flex align-items-center"><svg width="13" height="13" class="me-auto"><circle cx="6.500" cy="6.500" r="6.200"/><path d="M5 5.500H7.200V10M5 10H9M6 3H7.500" stroke="#fff" stroke-width="1.500" fill="none"/></svg><div class="dbtn">OK</div><div class="dbtn">Annuler</div></div>
</section>

<div class="win hint">Paramètres pour ajuster l'alignement et le mouvement de</div>

<aside class="win browser">
<div class="winhead d-flex align-items-center"><svg width="11" height="11"><use href="#plusdot"/></svg><span>COMMENTAIRES</span></div>
<div class="winhead d-flex align-items-center"><svg width="11" height="11"><use href="#minus"/></svg><span>NAVIGATEUR</span></div>
<div class="tree">
<div class="track"><div class="thumb"></div></div>
<div class="node l0"><svg class="tw" width="12" height="12"><use href="#opened"/></svg><svg class="ey" width="18" height="12"><use href="#eye"/></svg><span class="rootname"><svg width="17" height="17"><path d="M2 4 5 1H9V7L12 6H16V13L13 16H2Z" fill="#f5f5f5" stroke="#333"/><path d="M2 10H9V16M9 10 12 6M9 7 9 10H13V16M13 10 16 6" fill="none" stroke="#777"/></svg>Boitier_de_SPARK v3</span></div>
<div class="node l1"><svg class="tw" width="12" height="15"><use href="#closed"/></svg><svg class="cogic" width="16" height="15"><use href="#cog"/></svg><span>Paramètres du document</span></div>
<div class="node l1"><svg class="tw" width="12" height="15"><use href="#closed"/></svg><svg class="ic" width="18" height="14"><use href="#folder"/></svg><span>Vues nommées</span></div>
<div class="node l1"><svg class="tw" width="12" height="15"><use href="#closed"/></svg><svg class="ic" width="18" height="14"><use href="#folder"/></svg><span>Jeux de sélection</span></div>
<div class="node l1"><svg class="tw" width="12" height="15"><use href="#closed"/></svg><svg class="ey" width="18" height="12"><use href="#eyeoff"/></svg><svg class="ic" width="18" height="14"><use href="#folder"/></svg><span>Origine</span></div>
<div class="node l1"><svg class="tw" width="12" height="15"><use href="#closed"/></svg><svg class="ey" width="18" height="12"><use href="#eyeoff"/></svg><svg class="ic" width="18" height="14"><use href="#folder"/></svg><span>Analyse</span></div>
<div class="node l1"><svg class="tw" width="12" height="12"><use href="#opened"/></svg><svg class="ey" width="18" height="12"><use href="#eye"/></svg><svg class="ic" width="18" height="14"><use href="#folder"/></svg><span>Liaisons</span></div>
<div class="node l2"><svg class="tw" width="12" height="15"><use href="#closed"/></svg><svg class="ey" width="18" height="12"><use href="#eye"/></svg><svg class="ic" width="18" height="14"><path d="M4.500 1.500H15.500V3.500H4.500ZM4.500 10.500H15.500V12.500H4.500Z" fill="#fff" stroke="#888"/><path d="M8 4 13 7 8 10Z" fill="#198ce6"/></svg><span>Glissière 1</span></div>
<div class="node l1"><svg class="tw" width="12" height="15"><use href="#closed"/></svg><svg class="ey" width="18" height="12"><use href="#eye"/></svg><svg class="ic" width="18" height="14"><use href="#folder"/></svg><span>Corps</span></div>
<div class="node l1"><svg class="tw" width="12" height="12"><use href="#opened"/></svg><svg class="ey" width="18" height="12"><use href="#eye"/></svg><svg class="ic" width="18" height="14"><use href="#folder"/></svg><span>Esquisses</span></div>
<div class="node l2"><span class="tw"></span><svg class="ey" width="18" height="12"><use href="#eyeoff"/></svg><svg class="ic" width="18" height="18"><use href="#sketchlock"/></svg><span>vis sur le coté</span></div>
<div class="node l2"><span class="tw"></span><svg class="ey" width="18" height="12"><use href="#eyeoff"/></svg><svg class="ic" width="18" height="18"><use href="#sketchlock"/></svg><span>Esquisse2</span></div>
<div class="node l2"><span class="tw"></span><svg class="ey" width="18" height="12"><use href="#eye"/></svg><svg class="ic" width="18" height="18"><path d="M3.500 3V15M4 2.500H15M15.500 3V9M4 15.500H9" fill="none" stroke="#666" stroke-dasharray="4 1"/><path d="M2 1h2v2H2zM14 1h2v2h-2zM2 14h2v2H2z" fill="#198ce6"/><path d="M10 17 10.500 14 15 10 17 12 12.500 16Z" fill="#f6bd50"/><path d="M15 10 16 9 18 11 17 12Z" fill="#e55"/></svg><span>vis</span></div>
</div>
</aside>

<div class="win anglebar d-flex align-items-center">
<svg width="12" height="22"><path d="M5 2V21M7 3V20" stroke="#bbb" stroke-dasharray="1 2"/><path d="M11 1V21" stroke="#d0d0d0" stroke-width="1.500"/></svg>
<svg width="13" height="10" class="unit"><path d="M.5.5H11.500V8.500H.5Z" fill="#fff" stroke="#666"/><path d="M1 4.500H3V3.500H4V4.500H6V3.500H7V4.500H9V3.500H11V8.500H1Z" fill="#1492ef"/></svg>
<i class="caret"></i><div class="angleval"><span>0.0 deg</span></div>
<svg width="4" height="14" class="ms-2"><path d="M3 1h3v3H3zM3 6h3v3H3zM3 11h3v3H3z" fill="#888"/></svg>
</div>

<div class="win viewbar">
<svg width="237" height="24" fill="none" stroke="#555">
<path d="M11.500 5V20M8.500 8 11.500 4 14.500 8M13 9.500Q19 10.500 18 13 16 15.500 7 14.500M10 9.500Q3 10.500 4 13.500M8 11.500 4 14.500 8 17.500" stroke-width="1.200"/>
<path d="M36.500 9.500H51.500V19.500H36.500ZM40 12.500H48V16H40ZM37 9 42 5V7H48L46 9"/>
<path d="M67 19 62 13Q61 10 64 12L66 14 64 6Q66 4 67 7L68 11 68 5Q70 3 71 6V11L73 5Q75 4 75 7L74 12 76 9Q78 9 77 11L75 17 73 20H68Z" fill="#fff"/>
<circle cx="92" cy="11" r="4" fill="#e9f0f1"/><path d="M95 14 100 19" stroke-width="2.500"/><path d="M99 6H104M101.500 3.500V8.500M99 10.500H104"/>
<path d="M114.500 4.500H129.500V19.500H114.500Z" stroke-dasharray="2 2"/><circle cx="121" cy="11" r="6" fill="#dceaea"/><path d="M125 15 130 20" stroke-width="2.700"/>
<path d="M147.500 4.500H162.500V16.500H147.500Z" fill="#eee" stroke="#555"/><path d="M149.500 6.500H160.500V14.500H149.500Z" fill="#9cbce6" stroke="#4a658f"/><path d="M152 19H158" stroke-width="2"/>
<path d="M178.500 4.500H193.500V19.500H178.500Z" fill="#fff"/><path d="M181.500 4V20M184.500 4V20M187.500 4V20M190.500 4V20M178 7.500H194M178 10.500H194M178 13.500H194M178 16.500H194" stroke="#999"/>
<path d="M209.500 5.500H216V11.500H209.500ZM217.500 5.500H223.500V11.500H217.500ZM209.500 13H216V18.500H209.500ZM217.500 13H223.500V18.500H217.500Z" fill="#a9c6ec" stroke="#4d6896"/>
<path d="M24 10H30L27 14ZM135 10H141L138 14ZM165 10H171L168 14ZM196 10H202L199 14ZM227 10H233L230 14Z" fill="#333" stroke="none"/>
</svg>
</div>
</main>

<footer class="timeline d-flex">
<div class="play d-flex">
<svg width="16" height="18"><path d="M4 3V15" stroke="currentColor" stroke-width="2"/><path d="M14 3V15L5 9Z" fill="currentColor"/></svg>
<svg width="16" height="18"><path d="M12 3V15L2 9Z" fill="currentColor"/><path d="M14 7V12" stroke="currentColor" stroke-width="1.500"/></svg>
<svg width="16" height="18"><path d="M3 1.500V16L14.500 9Z" fill="currentColor"/></svg>
<svg width="16" height="18"><path d="M5 3V15L15 9Z" fill="currentColor"/><path d="M3 7V12" stroke="currentColor" stroke-width="1.500"/></svg>
<svg width="16" height="18"><path d="M3 3V15L12 9Z" fill="currentColor"/><path d="M13.500 3V15" stroke="currentColor" stroke-width="2"/></svg>
</div>
<div class="feats d-flex">
<div class="feat"><svg width="18" height="18"><use href="#sketch"/></svg></div>
<div class="feat"><svg width="18" height="18"><use href="#extrude"/></svg></div>
<div class="feat"><svg width="18" height="18"><use href="#shell"/></svg></div>
<div class="feat"><svg width="18" height="18"><use href="#sketch"/></svg></div>
<div class="feat"><svg width="18" height="18"><use href="#sketch"/></svg></div>
<div class="feat"><svg width="18" height="18"><use href="#extrude"/></svg></div>
<div class="feat"><svg width="18" height="18"><path d="M1.500 6.500H4.500V11.500H1.500ZM7.500 6.500H10.500V11.500H7.500ZM13.500 6.500H16.500V11.500H13.500Z" fill="#fff" stroke="#555"/></svg><svg class="expand" width="10" height="10"><path d="M0 0H10V10H0Z" fill="#777"/><path d="M5 2V8M2 5H8" stroke="#fff" stroke-width="1.500"/></svg></div>
<div class="feat"><svg width="18" height="18"><path d="M1 17 6 11 3 8 6 7 10 4V2L11 1 17 7 16 8H14L10 12 10 15 7 12Z" fill="#e2945f" stroke="#bd7443" stroke-width=".7"/></svg></div>
<div class="feat"><svg width="18" height="18"><path d="M4 14.500V6Q5 2 9 1.500 13 3 13.500 6V16L10 13.500V8H8V12Z" fill="#ccc" stroke="#888"/></svg></div>
<div class="feat"><svg width="18" height="18"><use href="#move" x="1" y="1" width="16" height="16"/></svg></div>
<div class="feat"><svg width="18" height="18"><use href="#flag"/></svg></div>
<div class="feat"><svg width="18" height="18"><use href="#extrude"/></svg></div>
<div class="feat"><svg width="18" height="18"><use href="#flag"/></svg></div>
<div class="feat"><svg width="18" height="18"><use href="#hole"/></svg></div>
<div class="feat"><svg width="18" height="18"><use href="#hole"/></svg></div>
<div class="feat"><svg width="18" height="18"><path d="M1.500 5 5 1.500H16.500V13L13 16.500H1.500Z" fill="#ddd" stroke="#555"/><path d="M3.500 12Q4 8 8 8 9.500 10 7 13 4 14.500 3.500 12M8.500 9Q9 5 13 5 15 6 12 10 9.500 11 8.500 9" fill="none" stroke="#666" stroke-width="1.200"/></svg></div>
<div class="feat"><svg width="18" height="18"><use href="#flag"/></svg></div>
<div class="feat"><svg width="18" height="18"><use href="#sketch"/></svg></div>
</div>
<svg class="marker" width="14" height="33"><path d="M1 0H13V4L8 9V32H6V9L1 4Z" fill="#555"/></svg>
<svg class="gear" width="16" height="16"><use href="#cog"/></svg>
</footer>
<script src="https://cdn.jsdelivr.net/npm/bootstrap@5.3.0/dist/js/bootstrap.bundle.min.js"></script>
</body>
</html>
